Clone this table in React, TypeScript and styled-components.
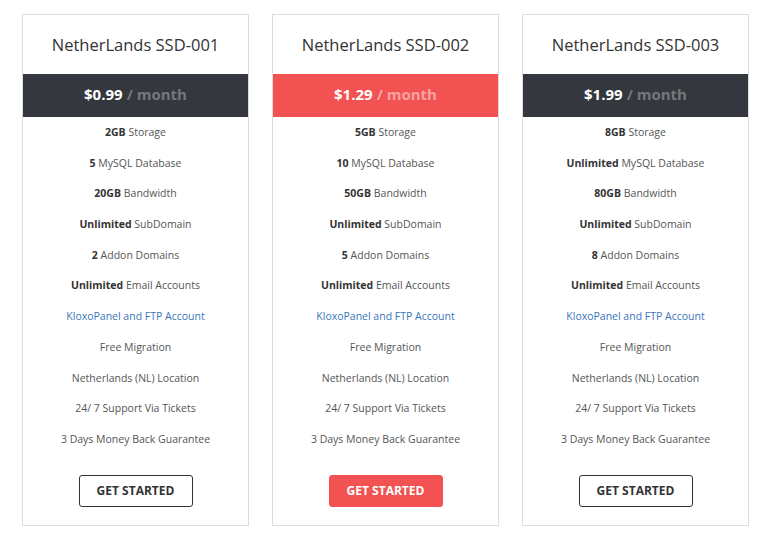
import React from "react";
import styled, { createGlobalStyle } from "styled-components";

const Global = createGlobalStyle`
  html, body { margin: 0; padding: 0; background: #fff; }
  body { font-family: "Open Sans", "Liberation Sans", sans-serif; }
`;

const Page = styled.div`
  display: flex;
  gap: 23px;
  padding: 14px 20px 0 22px;
  align-items: flex-start;
`;

const Card = styled.div`
  width: 227px;
  box-sizing: border-box;
  border: 1px solid #dddddd;
  display: flex;
  flex-direction: column;
  align-items: stretch;
  padding-bottom: 18px;
`;

const Title = styled.div`
  height: 59px;
  display: flex;
  align-items: center;
  justify-content: center;
  font-size: 16.5px;
  color: #333;
`;

const Band = styled.div<{ $featured: boolean }>`
  height: 43px;
  box-sizing: border-box;
  padding-bottom: 3px;
  display: flex;
  align-items: center;
  justify-content: center;
  background: ${(p) => (p.$featured ? "#f25252" : "#34373e")};
  font-size: 15px;
  font-weight: 700;
  color: #fff;
`;

const Per = styled.span<{ $featured: boolean }>`
  color: ${(p) => (p.$featured ? "#f9a3a3" : "#75777b")};
  margin-left: 4px;
`;

const List = styled.ul`
  list-style: none;
  margin: 0;
  padding: 0;
  text-align: center;
`;

const Item = styled.li<{ $link?: boolean }>`
  height: 30.7px;
  line-height: 30.7px;
  font-size: 10.5px;
  color: ${(p) => (p.$link ? "#3a75b8" : "#555")};
  b { color: #333; font-weight: 700; }
`;

const Button = styled.button<{ $featured: boolean }>`
  align-self: center;
  margin-top: 20px;
  width: 114px;
  height: 32px;
  box-sizing: border-box;
  border-radius: 3px;
  font-family: "Open Sans", "Liberation Sans", sans-serif;
  font-size: 12px;
  font-weight: 700;
  cursor: pointer;
  border: 1px solid ${(p) => (p.$featured ? "#f25252" : "#333")};
  background: ${(p) => (p.$featured ? "#f25252" : "#fff")};
  color: ${(p) => (p.$featured ? "#fff" : "#333")};
`;

type Plan = {
  name: string;
  price: string;
  storage: string;
  db: string;
  bw: string;
  addon: string;
  featured: boolean;
};

const plans: Plan[] = [
  { name: "NetherLands SSD-001", price: "$0.99", storage: "2GB", db: "5", bw: "20GB", addon: "2", featured: false },
  { name: "NetherLands SSD-002", price: "$1.29", storage: "5GB", db: "10", bw: "50GB", addon: "5", featured: true },
  { name: "NetherLands SSD-003", price: "$1.99", storage: "8GB", db: "Unlimited", bw: "80GB", addon: "8", featured: false },
];

export default function App() {
  return (
    <>
      <Global />
      <Page>
        {plans.map((p) => (
          <Card key={p.name}>
            <Title>{p.name}</Title>
            <Band $featured={p.featured}>
              {p.price}
              <Per $featured={p.featured}>/ month</Per>
            </Band>
            <List>
              <Item><b>{p.storage}</b> Storage</Item>
              <Item><b>{p.db}</b> MySQL Database</Item>
              <Item><b>{p.bw}</b> Bandwidth</Item>
              <Item><b>Unlimited</b> SubDomain</Item>
              <Item><b>{p.addon}</b> Addon Domains</Item>
              <Item><b>Unlimited</b> Email Accounts</Item>
              <Item $link>KloxoPanel and FTP Account</Item>
              <Item>Free Migration</Item>
              <Item>Netherlands (NL) Location</Item>
              <Item>24/ 7 Support Via Tickets</Item>
              <Item>3 Days Money Back Guarantee</Item>
            </List>
            <Button $featured={p.featured}>GET STARTED</Button>
          </Card>
        ))}
      </Page>
    </>
  );
}
